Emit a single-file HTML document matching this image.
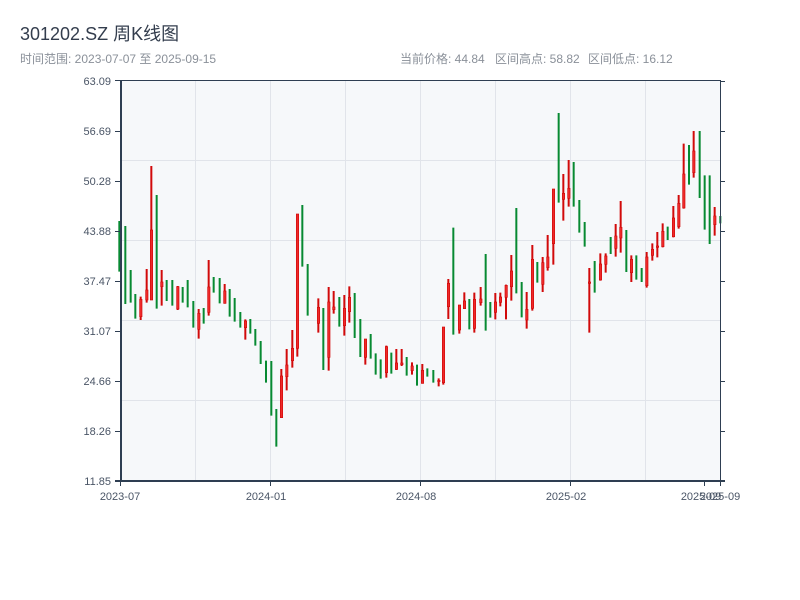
<!DOCTYPE html>
<html><head><meta charset="utf-8"><style>
html,body{margin:0;padding:0;background:#fff;width:800px;height:600px;overflow:hidden}
svg{display:block}
text{font-family:"Liberation Sans","Noto Sans CJK SC",sans-serif}
</style></head><body>
<svg width="800" height="600" viewBox="0 0 800 600" xmlns="http://www.w3.org/2000/svg">
<text x="20" y="40" font-size="18" fill="#333d4d">301202.SZ 周K线图</text>
<text x="20" y="63" font-size="12" fill="#8a9099">时间范围: 2023-07-07 至 2025-09-15</text>
<text x="400" y="63" font-size="12" fill="#8a9099">当前价格: 44.84</text>
<text x="495" y="63" font-size="12" fill="#8a9099">区间高点: 58.82</text>
<text x="588" y="63" font-size="12" fill="#8a9099">区间低点: 16.12</text>
<rect x="120" y="81" width="600" height="400" fill="#f6f8fa"/>
<g stroke="#e1e4ea" stroke-width="1">
<path d="M195.5 81V481M270.5 81V481M345.5 81V481M420.5 81V481M495.5 81V481M570.5 81V481M645.5 81V481"/>
<path d="M120 160.5H720M120 240.5H720M120 320.5H720M120 400.5H720"/>
</g>
<g transform="translate(110,160) scale(0.33333)">
<g stroke="#078a32" fill="#078a32" stroke-width="6">
<path d="M28 183V335M46 198V432M62 330V428M76 402V476M140 105V446M170 360V423M187 360V437M218 381V428M233 360V442M250 423V503M281 444V491M311 351V398M329 354V430M359 387V470M374 414V485M391 456V503M421 477V521M436 507V557M452 543V612M468 602V668M484 603V767M499 747V860M577 135V320M593 312V467"/>
</g>
<g stroke="#d10a0a" fill="#ee2a2a" stroke-width="6">
<path d="M92 410V480M110 327V428M124 18V420M155 330V437M203 378V450M266 447V536M296 300V467M344 372V431M406 478V539M514 627V773M530 567V691M547 510V623M562 162V590"/>
</g>
<g stroke="#d10a0a" fill="#ee2a2a" stroke-width="2">
<rect x="89" y="418" width="7" height="52"/><rect x="107" y="390" width="7" height="30"/><rect x="121" y="210" width="7" height="210"/><rect x="152" y="366" width="7" height="14"/><rect x="200" y="380" width="7" height="67"/><rect x="263" y="460" width="7" height="48"/><rect x="293" y="381" width="7" height="76"/><rect x="341" y="393" width="7" height="37"/><rect x="403" y="483" width="7" height="20"/><rect x="511" y="648" width="7" height="125"/><rect x="527" y="615" width="7" height="35"/><rect x="544" y="565" width="7" height="37"/><rect x="559" y="162" width="7" height="403"/>
</g>
</g>
<g transform="translate(310,190) scale(0.33333)">
<g stroke="#078a32" fill="#078a32" stroke-width="6">
<path d="M40 354V540M88 321V410M134 309V444M151 387V501M182 432V506M197 490V554M212 508V566M244 488V551M290 501V557M321 524V587M352 535V560M370 540V578M430 113V434M478 327V418M527 192V422M541 336V383M619 54V310"/>
</g>
<g stroke="#d10a0a" fill="#ee2a2a" stroke-width="6">
<path d="M25 325V428M56 291V542M71 303V371M103 315V437M118 289V398M166 447V524M229 467V563M259 477V540M275 477V528M306 517V554M337 522V581M386 565V589M400 411V584M415 267V387M448 345V431M463 307V356M493 308V428M512 291V347M556 309V388M571 308V349M588 284V388M604 195V332"/>
</g>
<g stroke="#d10a0a" fill="#ee2a2a" stroke-width="2">
<rect x="22" y="352" width="7" height="48"/><rect x="53" y="336" width="7" height="166"/><rect x="68" y="351" width="7" height="8"/><rect x="100" y="355" width="7" height="52"/><rect x="115" y="322" width="7" height="43"/><rect x="163" y="447" width="7" height="55"/><rect x="226" y="470" width="7" height="78"/><rect x="256" y="519" width="7" height="19"/><rect x="272" y="519" width="7" height="5"/><rect x="303" y="528" width="7" height="14"/><rect x="334" y="541" width="7" height="39"/><rect x="383" y="571" width="7" height="4"/><rect x="397" y="411" width="7" height="167"/><rect x="412" y="280" width="7" height="70"/><rect x="445" y="345" width="7" height="75"/><rect x="460" y="333" width="7" height="23"/><rect x="490" y="328" width="7" height="87"/><rect x="509" y="327" width="7" height="11"/><rect x="553" y="336" width="7" height="31"/><rect x="568" y="321" width="7" height="16"/><rect x="585" y="286" width="7" height="36"/><rect x="601" y="243" width="7" height="47"/>
</g>
</g>
<g transform="translate(510,100) scale(0.33333)">
<g stroke="#078a32" fill="#078a32" stroke-width="6">
<path d="M35 546V652M82 486V548M146 39V308M191 186V320M208 300V398M224 366V440M254 483V578M302 411V462M349 390V516M379 466V539M395 504V546M473 380V420M537 135V254M569 93V294M584 226V389M599 226V432M631 348V370"/>
</g>
<g stroke="#d10a0a" fill="#ee2a2a" stroke-width="6">
<path d="M50 576V686M67 435V632M98 471V576M113 405V512M130 267V494M160 222V362M176 180V320M238 504V698M271 460V542M287 460V518M317 372V470M332 303V458M364 466V546M410 456V563M427 430V482M442 396V472M458 370V442M490 318V412M506 285V386M521 131V326M551 93V233M614 321V407"/>
</g>
<g stroke="#d10a0a" fill="#ee2a2a" stroke-width="2">
<rect x="47" y="628" width="7" height="32"/><rect x="64" y="478" width="7" height="147"/><rect x="95" y="488" width="7" height="65"/><rect x="110" y="471" width="7" height="32"/><rect x="127" y="267" width="7" height="164"/><rect x="157" y="280" width="7" height="18"/><rect x="173" y="265" width="7" height="30"/><rect x="235" y="546" width="7" height="4"/><rect x="268" y="492" width="7" height="48"/><rect x="284" y="468" width="7" height="25"/><rect x="314" y="408" width="7" height="37"/><rect x="329" y="382" width="7" height="32"/><rect x="361" y="478" width="7" height="40"/><rect x="407" y="471" width="7" height="86"/><rect x="424" y="448" width="7" height="18"/><rect x="439" y="438" width="7" height="4"/><rect x="455" y="394" width="7" height="46"/><rect x="487" y="354" width="7" height="56"/><rect x="503" y="310" width="7" height="70"/><rect x="518" y="222" width="7" height="102"/><rect x="548" y="153" width="7" height="65"/><rect x="611" y="348" width="7" height="26"/>
</g>
</g>
<g stroke="#2e3e52" fill="none">
<path d="M115 80.5H720" stroke-width="1"/>
<path d="M121 80V482" stroke-width="2"/>
<path d="M720.5 80V482" stroke-width="1"/>
<path d="M115 481H725" stroke-width="2"/>
<path d="M115 131.5H121M115 181.5H121M115 231.5H121M115 281.5H121M115 331.5H121M115 381.5H121M115 431.5H121" stroke-width="1"/>
<path d="M720 81.5H725M720 131.5H725M720 181.5H725M720 231.5H725M720 281.5H725M720 331.5H725M720 381.5H725M720 431.5H725M720 481.5H725" stroke-width="1"/>
<path d="M120.5 481V486M270.5 481V486M420.5 481V486M570.5 481V486M704.5 481V486M720.5 481V486" stroke-width="1"/>
</g>
<g font-size="11" fill="#4a5566" text-anchor="end">
<text x="111" y="85">63.09</text><text x="111" y="135">56.69</text><text x="111" y="185">50.28</text><text x="111" y="235">43.88</text><text x="111" y="285">37.47</text><text x="111" y="335">31.07</text><text x="111" y="385">24.66</text><text x="111" y="435">18.26</text><text x="111" y="485">11.85</text>
</g>
<g font-size="11" fill="#4a5566" text-anchor="middle">
<text x="120" y="500">2023-07</text><text x="266" y="500">2024-01</text><text x="416" y="500">2024-08</text><text x="566" y="500">2025-02</text><text x="701" y="500">2025-09</text><text x="720" y="500">2025-09</text>
</g>
</svg>
</body></html>
